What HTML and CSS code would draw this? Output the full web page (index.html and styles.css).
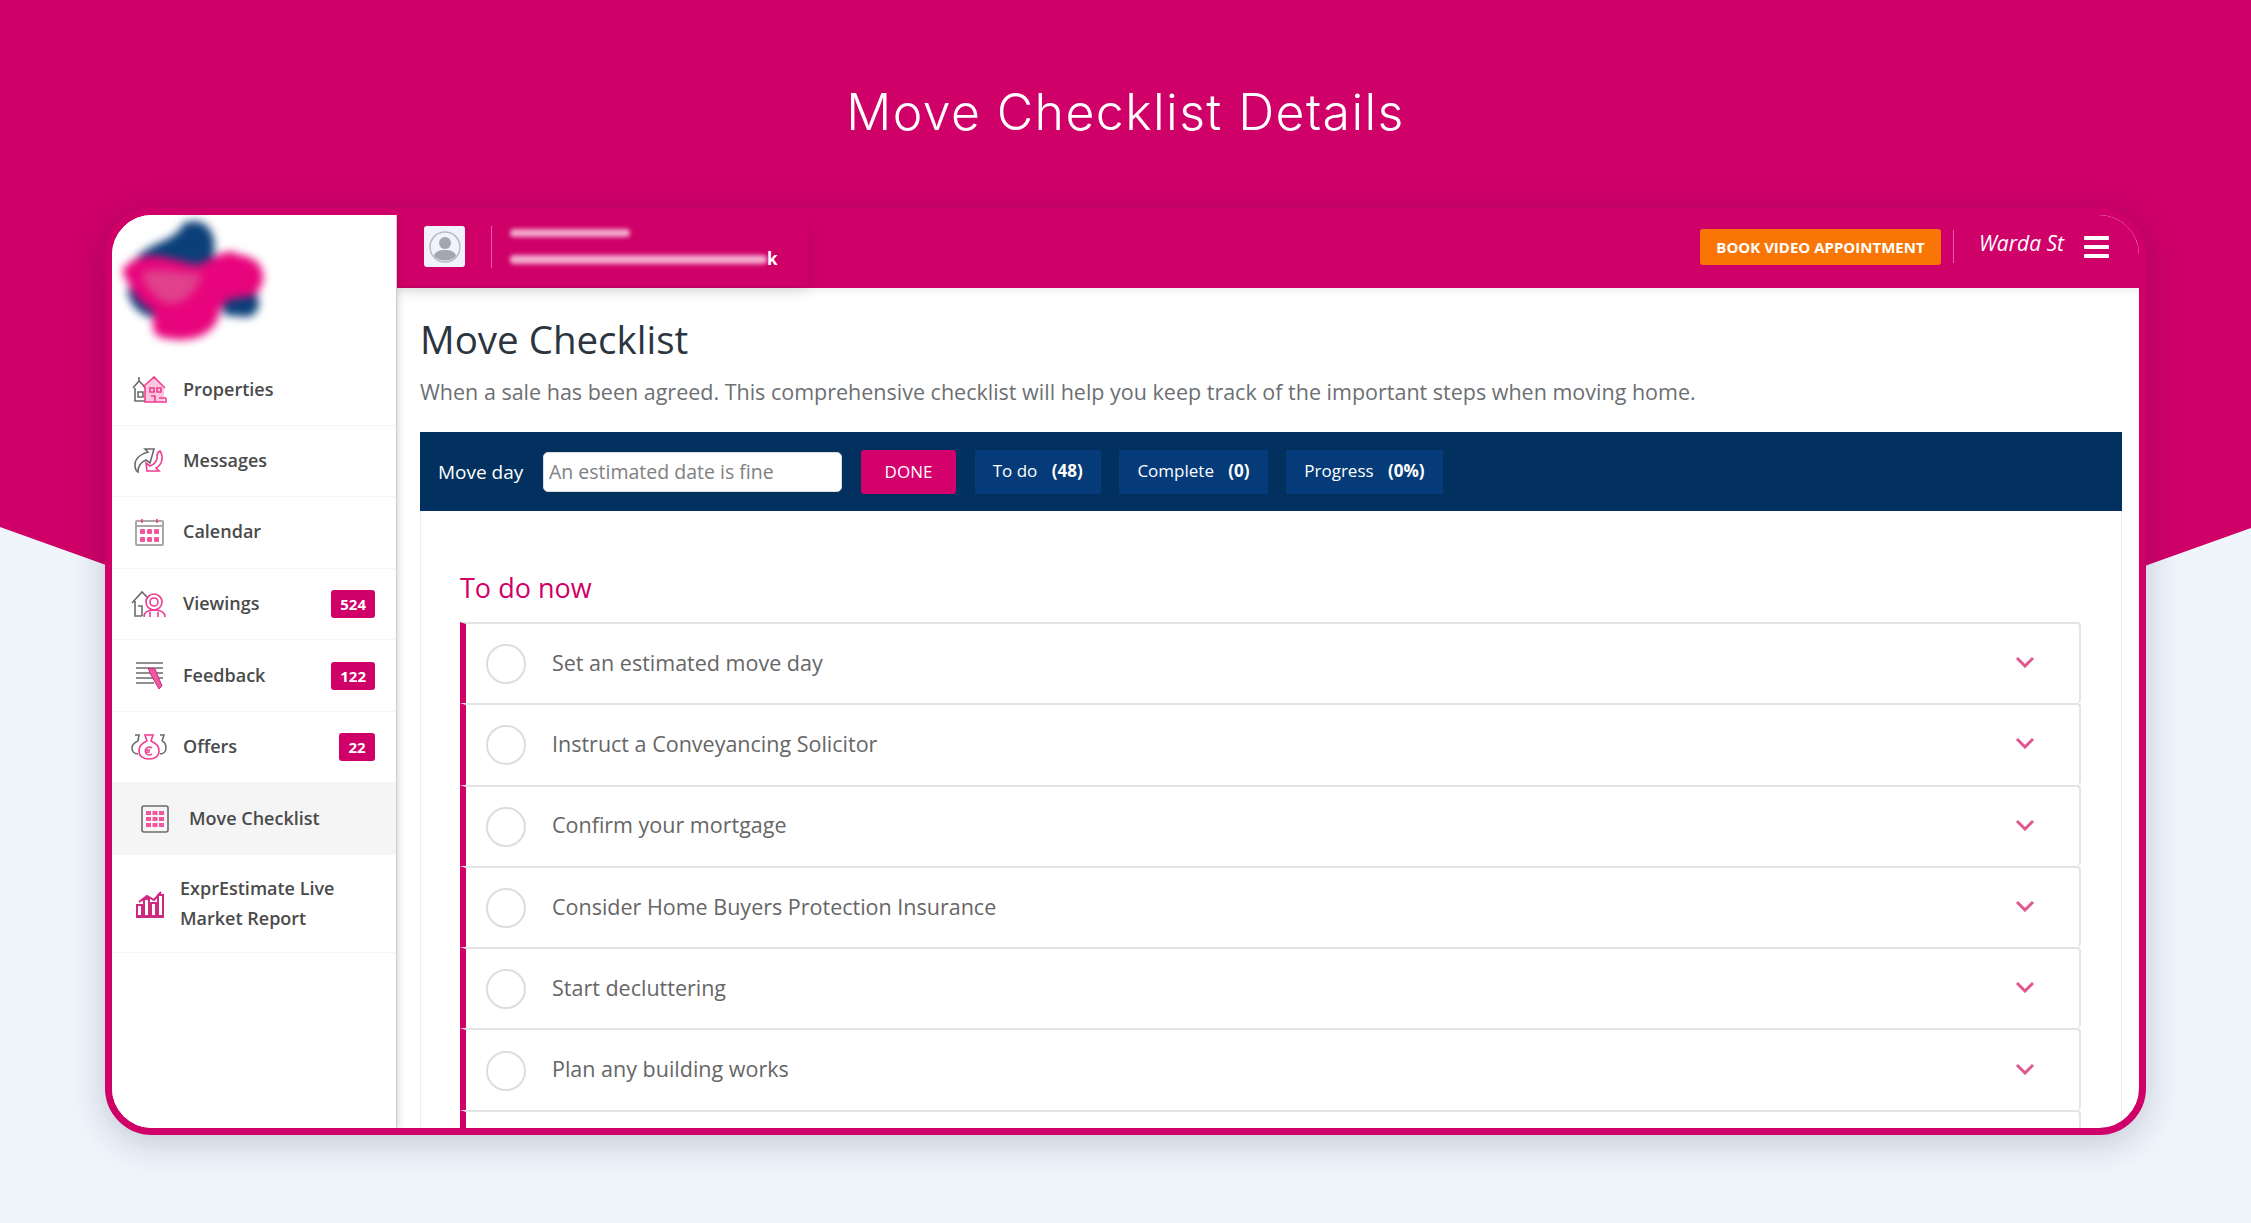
FILE: index.html
```html
<!DOCTYPE html>
<html lang="en">
<head>
<meta charset="utf-8">
<title>Move Checklist Details</title>
<link rel="stylesheet" href="styles.css">
</head>
<body>
<div class="backdrop"></div>
<div class="page">
  <h1 class="page-title">Move Checklist Details</h1>
  <div class="frame">
    <aside class="sidebar">
      <div class="logo">
        <svg class="logo-art" width="170" height="130" viewBox="0 0 170 130">
          <path fill="#0b3f78" d="M22 45 C40 25 62 28 72 8 C95 0 108 20 100 45 L60 60 Z"/>
          <path fill="#0b3f78" d="M15 75 C30 70 40 75 55 85 L60 105 C40 105 20 100 15 75 Z"/>
          <path fill="#0b3f78" d="M110 82 L142 76 C150 85 148 100 135 102 L112 100 Z"/>
          <path fill="#e8047c" d="M10 55 C30 30 60 45 85 50 C100 45 115 30 127 40 C152 42 158 65 143 80 C125 85 115 80 108 95 C105 120 80 130 48 122 C35 115 45 105 40 95 C30 90 20 80 10 55 Z"/>
          <path fill="#e0408c" d="M30 58 C50 50 70 60 90 58 C85 78 70 92 52 88 C42 80 30 70 30 58 Z"/>
        </svg>
      </div>
      <nav class="nav">
        <a class="nav-item">
          <svg class="nav-icon" viewBox="0 0 36 28"><path class="ig" d="M2 12 8 5l7 7M4 12v13h10M7 16h5v5H7zM8 5V1"/><path class="ipl" d="m14 11 9-10 10 11v14H14z"/><path class="ip" d="m12 11 11-10 11 11M14 11v15h21v-4M19 12h4v4h-4zM26 12h4v4h-4zM20 20h4v6M28 22h7"/></svg>
          <span class="nav-label">Properties</span>
        </a>
        <a class="nav-item">
          <svg class="nav-icon" viewBox="0 0 36 28"><path class="ig" d="M23 2h-9l3 3C9 7 4 12 4 18c0 3 1 6 3 7 0-6 3-10 8-12l4 3z"/><path class="ip" d="M29 4c4 6 2 14-4 17l3 3h-12l-1-8 4 3c5-2 8-6 7-10 0-2 1-4 3-5z"/></svg>
          <span class="nav-label">Messages</span>
        </a>
        <a class="nav-item">
          <svg class="nav-icon" viewBox="0 0 36 28"><rect class="igl" x="5" y="3" width="27" height="24" rx="1"/><path class="igl" d="M5 8h27"/><path class="ip" d="M11 1v4M26 1v4"/><g class="dots"><rect x="9" y="11" width="5" height="5" rx="1"/><rect x="16" y="11" width="5" height="5" rx="1"/><rect x="23" y="11" width="5" height="5" rx="1"/><rect x="9" y="19" width="5" height="5" rx="1"/><rect x="16" y="19" width="5" height="5" rx="1"/><rect x="23" y="19" width="5" height="5" rx="1"/></g></svg>
          <span class="nav-label">Calendar</span>
        </a>
        <a class="nav-item">
          <svg class="nav-icon" viewBox="0 0 36 28"><path class="ig" d="M1 13 11 2l6 6M4 11v15h7M7 16h4v10"/><circle class="ip" cx="23" cy="12" r="8"/><circle class="ip" cx="23" cy="12" r="4"/><path class="ip" d="M13 27c0-5 4-7 10-7s11 2 11 7M19 22v5M27 22v5"/></svg>
          <span class="nav-label">Viewings</span>
          <span class="badge">524</span>
        </a>
        <a class="nav-item">
          <svg class="nav-icon" viewBox="0 0 36 28"><path class="ig" d="M5 1h27M5 6h27M5 11h27M5 16h27M5 21h18"/><path class="ipf" d="m17 6 7 1 7 17-3 3-8-14z"/></svg>
          <span class="nav-label">Feedback</span>
          <span class="badge">122</span>
        </a>
        <a class="nav-item">
          <svg class="nav-icon" viewBox="0 0 36 28"><path class="ig" d="M4 2h4L7 8M7 8c-3 1-6 4-6 7 0 4 3 6 6 6M29 2h4l-2 6M31 8c3 1 4 4 4 7 0 4-3 6-6 6"/><path class="ip" d="M14 2h8l-2 6c5 2 8 6 8 10 0 5-4 8-10 8S8 23 8 18c0-4 3-8 8-10z"/><path class="ip" d="M21 15a4 4 0 1 0 0 6M14 17h5M14 19h5"/></svg>
          <span class="nav-label">Offers</span>
          <span class="badge">22</span>
        </a>
        <a class="nav-item nav-item-active">
          <svg class="nav-icon nav-icon-small" viewBox="0 0 28 28"><rect class="ig" x="1" y="1" width="26" height="26" rx="2"/><g class="dots"><rect x="5" y="6" width="5" height="4"/><rect x="11.500" y="6" width="5" height="4"/><rect x="18" y="6" width="5" height="4"/><rect x="5" y="12" width="5" height="4"/><rect x="11.500" y="12" width="5" height="4"/><rect x="18" y="12" width="5" height="4"/><rect x="5" y="18" width="5" height="4"/><rect x="11.500" y="18" width="5" height="4"/><rect x="18" y="18" width="5" height="4"/></g></svg>
          <span class="nav-label">Move Checklist</span>
        </a>
        <a class="nav-item nav-item-tall">
          <svg class="nav-icon nav-icon-chart" viewBox="0 0 30 28"><path class="ipd" d="M1 27h28M2 26V15h5v11zM9 26V9h5v17zM16 26V13h5v13zM23 26V5h5v21zM4 12l8-6 7 4 7-8"/></svg>
          <span class="nav-label">ExprEstimate Live<br>Market Report</span>
        </a>
      </nav>
    </aside>
    <section class="content">
      <header class="topbar">
        <div class="account">
          <div class="avatar">
            <svg width="32" height="32" viewBox="0 0 32 32"><circle cx="16" cy="16" r="15" fill="none" stroke="#b9b9c4" stroke-width="1.500"/><circle cx="16" cy="12" r="6" fill="#a5a5b0"/><path fill="#a5a5b0" d="M5 25c1-5 6-6 11-6s10 1 11 6c-6 6-16 6-22 0z"/></svg>
          </div>
          <div class="account-rule"></div>
          <div class="account-lines">
            <div class="smudge smudge-name"></div>
            <div class="account-mail"><div class="smudge smudge-mail"></div><span class="mail-end">k</span></div>
          </div>
        </div>
        <div class="topbar-right">
          <button class="book-btn">BOOK VIDEO APPOINTMENT</button>
          <div class="top-rule"></div>
          <span class="user-name">Warda St</span>
          <div class="burger"><i></i><i></i><i></i></div>
        </div>
      </header>
      <main class="main">
        <h2 class="heading">Move Checklist</h2>
        <p class="intro">When a sale has been agreed. This comprehensive checklist will help you keep track of the important steps when moving home.</p>
        <div class="toolbar">
          <span class="toolbar-label">Move day</span>
          <input class="date-input" placeholder="An estimated date is fine">
          <button class="done-btn">DONE</button>
          <span class="stat">To do <b>(48)</b></span>
          <span class="stat">Complete <b>(0)</b></span>
          <span class="stat">Progress <b>(0%)</b></span>
        </div>
        <div class="panel">
          <h3 class="panel-title">To do now</h3>
          <ul class="tasks">
            <li class="task"><span class="radio"></span><span class="task-text">Set an estimated move day</span><svg class="chev" viewBox="0 0 20 12"><path d="M2 2l8 8 8-8"/></svg></li>
            <li class="task"><span class="radio"></span><span class="task-text">Instruct a Conveyancing Solicitor</span><svg class="chev" viewBox="0 0 20 12"><path d="M2 2l8 8 8-8"/></svg></li>
            <li class="task"><span class="radio"></span><span class="task-text">Confirm your mortgage</span><svg class="chev" viewBox="0 0 20 12"><path d="M2 2l8 8 8-8"/></svg></li>
            <li class="task"><span class="radio"></span><span class="task-text">Consider Home Buyers Protection Insurance</span><svg class="chev" viewBox="0 0 20 12"><path d="M2 2l8 8 8-8"/></svg></li>
            <li class="task"><span class="radio"></span><span class="task-text">Start decluttering</span><svg class="chev" viewBox="0 0 20 12"><path d="M2 2l8 8 8-8"/></svg></li>
            <li class="task"><span class="radio"></span><span class="task-text">Plan any building works</span><svg class="chev" viewBox="0 0 20 12"><path d="M2 2l8 8 8-8"/></svg></li>
            <li class="task"></li>
          </ul>
        </div>
      </main>
    </section>
  </div>
</div>
</body>
</html>
```
FILE: styles.css
```css
* { box-sizing: border-box; }
html, body { margin: 0; padding: 0; }
body {
  width: 2251px;
  height: 1223px;
  overflow: hidden;
  background: #f0f5fc;
  font-family: "Open Sans", "Liberation Sans", sans-serif;
  position: relative;
}
.backdrop {
  position: absolute;
  inset: 0;
  background: #cf0068;
  clip-path: polygon(0 0, 100% 0, 100% 528px, 50% 930px, 0 527px);
}
.page { position: relative; padding: 0 105px; }
.page-title {
  margin: 0;
  height: 208px;
  padding-top: 76px;
  text-align: center;
  color: #fff;
  font-family: "Inter", "Liberation Sans", sans-serif;
  font-weight: 300;
  font-size: 50px;
  letter-spacing: 1.400px;
  line-height: 72px;
}
.frame {
  display: flex;
  width: 2041px;
  height: 927px;
  border: 7px solid #cf0068;
  border-radius: 47px;
  background: #fff;
  overflow: hidden;
  box-shadow: 0 8px 36px rgba(30, 30, 60, .22);
}
.sidebar {
  width: 285px;
  flex: none;
  background: #fff;
  border-right: 1px solid #ccc;
  position: relative;
  z-index: 2;
  box-shadow: 3px 0 6px rgba(0, 0, 0, .08);
}
.logo { height: 127.500px; }
.logo-art { filter: blur(4px); display: block; }
.nav-item {
  display: flex;
  align-items: center;
  height: 71.600px;
  padding: 0 21px 0 19px;
  color: #4a4a4a;
  border-bottom: 1px solid #f5f5f5;
}
.nav-item:first-child { height: 83px; padding-top: 12px; }
.nav-icon { width: 36px; height: 28px; flex: none; margin-right: 16px; }
.nav-icon-small { width: 28px; margin: 0 20px 0 10px; }
.nav-icon-chart { width: 30px; margin: 0 15px 0 4px; }
.nav-label { font-size: 18px; font-weight: 600; line-height: 30px; position: relative; top: -1px; }
.nav-item-active { background: #f5f5f5; border-bottom: 0; }
.nav-item-tall { height: 98px; }
.ig, .igl, .ip, .ipd { fill: none; stroke-width: 1.600; }
.ig { stroke: #6b6b6b; }
.igl { stroke: #a8a8a8; stroke-width: 2; }
.ip { stroke: #ef3d8f; }
.ipl { fill: #fbc6de; }
.ipd { stroke: #cf2a7f; stroke-width: 2; }
.ipf { fill: #ef5a9f; stroke: #cf2a7f; }
.dots { fill: #f0559d; }
.badge {
  margin-left: auto;
  height: 28px;
  min-width: 36px;
  padding: 0 9px;
  border-radius: 3px;
  background: #cf0068;
  color: #fff;
  font-size: 15px;
  font-weight: 700;
  line-height: 28px;
  text-align: center;
}
.content { flex: 1; min-width: 0; display: flex; flex-direction: column; }
.topbar {
  height: 73px;
  flex: none;
  background: #cf0068;
  display: flex;
  align-items: center;
  justify-content: space-between;
  padding: 0 30px 10px 27px;
}
.account { display: flex; align-items: center; height: 60px; position: relative; }
.account::after {
  content: "";
  position: absolute;
  left: -27px;
  right: -30px;
  top: 0;
  bottom: -9px;
  box-shadow: 0 6px 14px rgba(0, 0, 0, .1);
  pointer-events: none;
}
.avatar {
  width: 41px;
  height: 41px;
  background: #f0f3fb;
  border-radius: 3px;
  display: flex;
  align-items: center;
  justify-content: center;
}
.account-rule { width: 1px; height: 42px; background: #ee5aa2; margin: 0 18px 0 26px; }
.account-lines { display: flex; flex-direction: column; gap: 17px; }
.smudge { height: 8px; background: #f3a7cd; border-radius: 4px; filter: blur(2px); }
.smudge-name { width: 120px; }
.account-mail { display: flex; align-items: center; width: 268px; }
.smudge-mail { width: 257px; height: 9px; }
.mail-end { color: #fff; font-size: 17px; font-weight: 700; line-height: 10px; }
.topbar-right { display: flex; align-items: center; }
.book-btn {
  width: 241px;
  height: 36px;
  border: 0;
  border-radius: 3px;
  background: #f97606;
  color: #fff;
  font-family: inherit;
  font-size: 15px;
  font-weight: 700;
  padding: 0;
}
.top-rule { width: 1px; height: 33px; background: #ee5aa2; margin: 0 25px 0 12px; }
.user-name { font-size: 21px; font-style: italic; font-weight: 400; color: #fff; position: relative; top: -4px; }
.burger { display: flex; flex-direction: column; gap: 5px; margin-left: 20px; }
.burger i { display: block; width: 25px; height: 4px; background: #fff; border-radius: 1px; }
.main { flex: 1; min-height: 0; padding: 0 17px 0 23px; box-shadow: inset 6px 8px 8px -6px rgba(0, 0, 0, .08); }
.heading { margin: 0; padding-top: 24px; font-size: 38.500px; font-weight: 400; line-height: 54px; color: #2c3440; }
.intro { margin: 9px 0 0; font-size: 21.500px; line-height: 34px; color: #6c6f73; }
.toolbar {
  display: flex;
  align-items: center;
  height: 79px;
  margin-top: 23px;
  padding-left: 18px;
  background: #03315f;
  color: #fff;
  font-size: 17px;
}
.toolbar-label { width: 105px; flex: none; font-size: 19px; }
.date-input {
  width: 299px;
  height: 40px;
  border: 1px solid #ddd;
  border-radius: 5px;
  padding: 0 5px;
  font: 19.500px "Open Sans", sans-serif;
}
.date-input::placeholder { color: #808080; opacity: 1; }
.done-btn {
  width: 95px;
  height: 44px;
  margin-left: 19px;
  border: 0;
  border-radius: 3px;
  background: #d4006b;
  color: #fff;
  font: 400 17px "Open Sans", sans-serif;
}
.stat {
  height: 44px;
  margin-left: 18.700px;
  padding: 0 18px;
  background: #043b78;
  line-height: 42px;
  white-space: pre;
}
.stat b { margin-left: 10px; font-weight: 700; }
.panel {
  border-left: 1px solid #eee;
  border-right: 1px solid #eee;
  padding: 0 40px 0 39px;
  height: 620px;
}
.panel-title {
  margin: 0;
  padding-top: 57px;
  height: 111px;
  font-size: 27px;
  font-weight: 400;
  line-height: 40px;
  color: #cf0068;
}
.tasks { list-style: none; margin: 0; padding: 0; }
.task {
  display: flex;
  align-items: center;
  height: 81.300px;
  padding: 1px 44px 0 20px;
  background: #fff;
  border: 2px solid #e4e4e4;
  border-width: 2px 2px 0 0;
  border-left: 6px solid #cf0068;
  border-radius: 0 4px 4px 0;
}
.radio { width: 40px; height: 40px; border: 2px solid #ddd; border-radius: 50%; flex: none; margin-right: 26px; }
.task-text { font-size: 21.500px; color: #666; position: relative; top: -2px; }
.chev { width: 20px; height: 12px; margin-left: auto; position: relative; top: -2px; }
.chev path { fill: none; stroke: #e0568f; stroke-width: 3; }
```
